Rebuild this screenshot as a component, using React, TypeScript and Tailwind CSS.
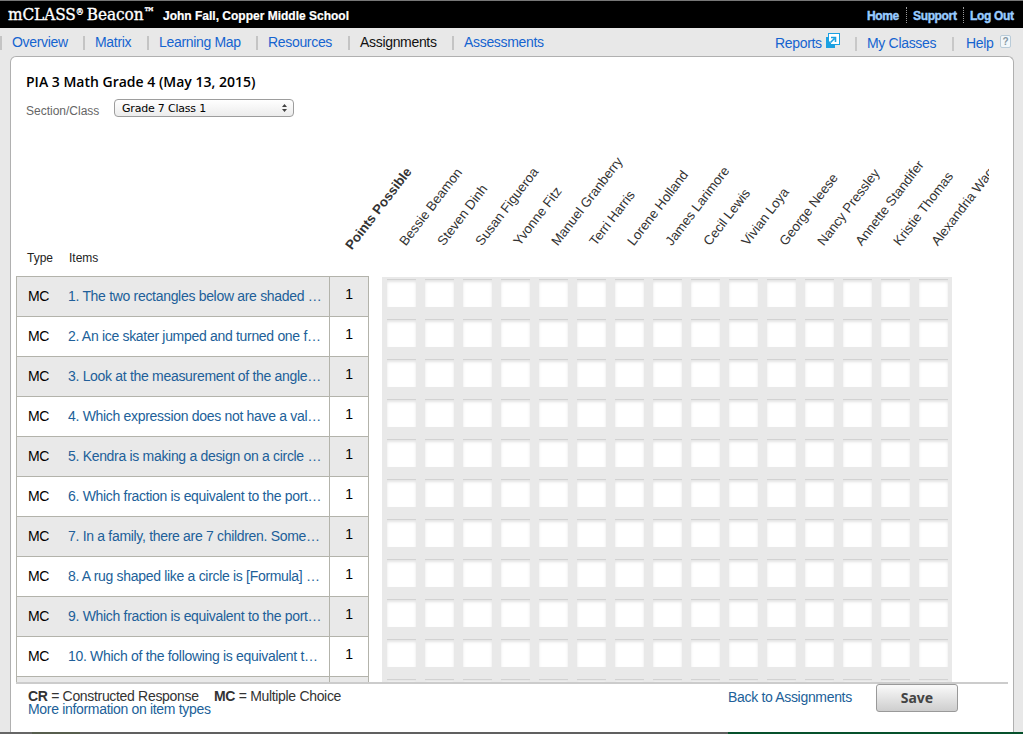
import React from 'react';

const items = [
  '1. The two rectangles below are shaded …',
  '2. An ice skater jumped and turned one f…',
  '3. Look at the measurement of the angle…',
  '4. Which expression does not have a val…',
  '5. Kendra is making a design on a circle …',
  '6. Which fraction is equivalent to the port…',
  '7. In a family, there are 7 children. Some…',
  '8. A rug shaped like a circle is [Formula] …',
  '9. Which fraction is equivalent to the port…',
  '10. Which of the following is equivalent t…',
  '',
];

const students = [
  'Bessie Beamon',
  'Steven Dinh',
  'Susan Figueroa',
  'Yvonne Fitz',
  'Manuel Granberry',
  'Terri Harris',
  'Lorene Holland',
  'James Larimore',
  'Cecil Lewis',
  'Vivian Loya',
  'George Neese',
  'Nancy Pressley',
  'Annette Standifer',
  'Kristie Thomas',
  'Alexandria Wagner',
];

const navItems = [
  { label: 'Overview', width: 'w-[71px]' },
  { label: 'Matrix', width: 'w-[52px]' },
  { label: 'Learning Map', width: 'w-[97px]' },
  { label: 'Resources', width: 'w-[80px]' },
  { label: 'Assignments', width: 'w-[92px]', active: true },
  { label: 'Assessments', width: 'w-[98px]' },
];

function Header() {
  return (
    <header className="flex h-7 items-start justify-between border-t border-[#777] bg-black text-white">
      <div className="flex pl-2">
        <span className="w-[155px] font-['DejaVu_Serif_Condensed','DejaVu_Serif',serif] text-[17px] leading-[26px] tracking-[-0.05px] whitespace-nowrap [-webkit-text-stroke:0.35px_white]">
          mCLASS<sup className="relative top-[-5px] align-baseline text-[9px] leading-none">®</sup>
          <span className="ml-[3px]">Beacon</span>
          <sup className="relative top-[-3px] align-baseline text-[13px] leading-none">™</sup>
        </span>
        <span className="pt-px text-[12px] leading-7 font-bold [-webkit-text-stroke:0.2px_white]">
          John Fall, Copper Middle School
        </span>
      </div>
      <div className="flex pt-[6px] pr-[9px] text-[12px] leading-[18px] font-bold tracking-[-0.35px] whitespace-nowrap text-[#99ccff] [-webkit-text-stroke:0.4px_#99ccff]">
        <span className="w-[39px]">Home</span>
        <span className="h-4 w-[7px] border-l border-dotted border-[#999]" />
        <span className="w-[50px]">Support</span>
        <span className="h-4 w-[7px] border-l border-dotted border-[#999]" />
        <span className="w-[44px]">Log Out</span>
      </div>
    </header>
  );
}

function ReportsIcon() {
  return (
    <svg className="mt-1 h-[15px] w-[14px]" viewBox="0 0 14 15">
      <rect x="0" y="4" width="9" height="11" fill="#1ba1e2" />
      <rect x="2.5" y="0.5" width="11" height="11" fill="#fff" stroke="#1ba1e2" />
      <path d="M2 12V7L5 10V12Z" fill="#1ba1e2" />
      <path d="M4.5 9.5 8.5 5.5M5 4.5H9.5V9" fill="none" stroke="#1ba1e2" strokeWidth="1.6" />
    </svg>
  );
}

function Nav() {
  return (
    <nav className="flex h-7 justify-between text-[14px] leading-7 tracking-[-0.32px] text-[#1564d0]">
      <div className="flex">
        {navItems.map((n) => (
          <div key={n.label} className="flex">
            <span className="mt-2 mr-[10.5px] h-[14px] w-[1.5px] bg-[#c4c4c4]" />
            <span className={`${n.width} ${n.active ? 'text-[#111]' : ''} whitespace-nowrap`}>{n.label}</span>
          </div>
        ))}
      </div>
      <div className="flex pt-px pr-3">
        <span className="w-[51px]">Reports</span>
        <ReportsIcon />
        <span className="mt-2 mr-[10px] ml-[15px] h-[14px] w-[2px] bg-[#c8c8c8]" />
        <span className="w-[85px]">My Classes</span>
        <span className="mt-2 mr-[12px] h-[14px] w-[2px] bg-[#c8c8c8]" />
        <span className="w-[34px]">Help</span>
        <span className="mt-[6px] flex h-[13px] w-[11px] items-center justify-center rounded-[2px] border border-[#b9cbd8] bg-[#f2f7fa] text-[10px] leading-none font-bold text-[#8798a3]">
          ?
        </span>
      </div>
    </nav>
  );
}

function ColumnHeadings() {
  return (
    <div className="flex h-[154px] w-[973px] overflow-hidden text-[#333]">
      <div className="flex w-[339px] items-end pb-[9px] pl-[11px] text-[12px] leading-[18px] text-[#222]">
        <span className="w-[42px]">Type</span>
        <span>Items</span>
      </div>
      <div className="flex w-[54px] shrink-0 items-end pb-[23px]">
        <span className="w-0 origin-bottom-left -rotate-[52.5deg] text-[13.33px] leading-4 font-bold whitespace-nowrap">
          Points Possible
        </span>
      </div>
      {students.map((s) => (
        <div key={s} className="flex w-[38px] shrink-0 items-end pb-[27px]">
          <span className="w-0 origin-bottom-left -rotate-[52.5deg] text-[13.33px] leading-4 whitespace-nowrap">{s}</span>
        </div>
      ))}
    </div>
  );
}

function ItemTable() {
  return (
    <div className="w-[353px] border-x border-[#b3b3ab]">
      {items.map((text, i) => (
        <div
          key={i}
          className={`flex h-10 border-t border-[#b3b3ab] text-[14px] tracking-[-0.31px] ${i % 2 === 0 ? 'bg-[#e9e9e9]' : 'bg-white'}`}
        >
          <div className="flex w-[313px] items-center border-r border-[#b3b3ab] pl-[11px]">
            <span className="w-10 shrink-0 text-black">{text ? 'MC' : ''}</span>
            <span className="whitespace-nowrap text-[#215f99]">{text}</span>
          </div>
          <span className="w-[38px] pt-[7px] text-center leading-5 text-black">{text ? '1' : ''}</span>
        </div>
      ))}
    </div>
  );
}

function ScoreGrid() {
  return (
    <div className="mt-px ml-[13px] w-[570px] bg-[#e9e9e9]">
      {items.map((_, r) => (
        <div key={r} className="flex h-10 pt-[2px]">
          {students.map((s) => (
            <div
              key={s}
              className="mr-1 ml-[5px] h-7 w-[29px] border-t border-[#d2d2d2] bg-white shadow-[inset_0_2px_3px_rgba(0,0,0,0.11)]"
            />
          ))}
        </div>
      ))}
    </div>
  );
}

function Footer() {
  return (
    <footer className="flex w-[992px] border-t-2 border-[#ccc] pl-3 text-[14px] leading-[13px] tracking-[-0.32px]">
      <div className="w-[700px] pt-[6px] text-[#333]">
        <div className="flex">
          <span className="w-[186px]">
            <b>CR</b> = Constructed Response
          </span>
          <span>
            <b>MC</b> = Multiple Choice
          </span>
        </div>
        <div className="text-[#215f99]">More information on item types</div>
      </div>
      <span className="w-[148px] pt-[7px] text-[#215f99]">Back to Assignments</span>
      <button className="h-7 w-[82px] rounded-[3px] border border-[#999] bg-linear-to-b from-[#fafafa] to-[#cecece] font-['Noto_Sans',sans-serif] text-[14px] leading-none font-bold tracking-normal text-[#444]">
        Save
      </button>
    </footer>
  );
}

export default function App() {
  return (
    <div className="flex h-[734px] w-[1023px] flex-col overflow-hidden bg-[#e8e8e8] font-['Liberation_Sans',Arial,sans-serif]">
      <Header />
      <Nav />
      <main className="ml-[10px] flex h-[676px] w-[1004px] flex-col rounded-t-[6px] border border-b-0 border-[#b0b0b0] bg-white pl-[5px]">
        <h1 className="mt-4 ml-[10px] font-['Open_Sans',sans-serif] text-[14px] leading-[18px] font-semibold text-black">
          PIA 3 Math Grade 4 (May 13, 2015)
        </h1>
        <div className="mt-2 ml-[10px] flex h-[23px]">
          <span className="w-[88px] pt-[5px] text-[12px] leading-[14px] text-[#666]">Section/Class</span>
          <div className="flex h-[18px] w-[180px] items-center justify-between rounded-[4px] border border-[#9d9d9d] bg-linear-to-b from-white to-[#ececec] pr-[6px] pl-[7px] font-['DejaVu_Sans',sans-serif] text-[11px] tracking-[-0.2px] text-black">
            <span className="pt-[2px]">Grade 7 Class 1</span>
            <svg className="h-2 w-[5px]" viewBox="0 0 5 8">
              <path d="M0 3 2.5 0 5 3ZM0 5 2.5 8 5 5Z" fill="#444" />
            </svg>
          </div>
        </div>
        <ColumnHeadings />
        <div className="flex h-[406px] shrink-0 overflow-hidden">
          <ItemTable />
          <ScoreGrid />
        </div>
        <Footer />
      </main>
      <div className="flex h-[2px]">
        <span className="w-8 bg-[#666]" />
        <span className="w-[48px] bg-[#575e4e]" />
        <span className="w-[648px] bg-[#606060]" />
        <span className="flex-1 bg-[#06512c]" />
      </div>
    </div>
  );
}
